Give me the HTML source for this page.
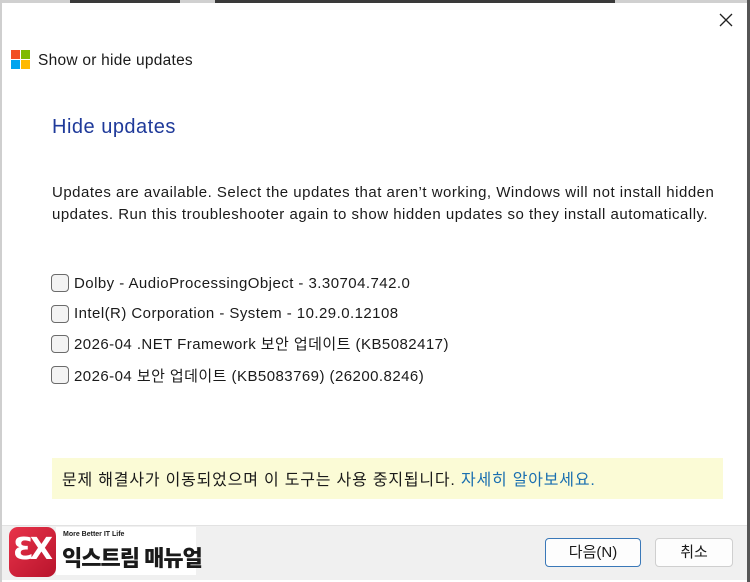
<!DOCTYPE html>
<html><head><meta charset="utf-8"><style>
*{margin:0;padding:0;box-sizing:border-box}
body{width:750px;height:582px;background:#fff;position:relative;overflow:hidden;font-family:"Liberation Sans","Noto Sans CJK KR",sans-serif;color:#1a1a1a}
.top{position:absolute;left:0;top:0;width:750px;height:3px;background:#d0d0d0}
.top b{position:absolute;top:0;height:3px;background:#3a3a3a}
.lb{position:absolute;left:0;top:0;width:2px;height:582px;background:#cfcfcf}
.rb{position:absolute;right:0;top:0;width:3px;height:582px;background:#555}
.abs{position:absolute;white-space:nowrap}
.cb{position:absolute;left:51px;width:18px;height:18px;border:1px solid #6b6b6b;border-radius:4px;background:#f3f3f3}
.item{position:absolute;left:74px;font-size:15px;line-height:20px;height:20px;color:#1a1a1a;letter-spacing:0.45px}
.footer{position:absolute;left:2px;top:525px;width:745px;height:55px;background:#f0f0f0;border-top:1px solid #e2e2e2}
.btn{position:absolute;height:29px;border:1px solid #cfcfcf;border-radius:4px;background:#fdfdfd;font-size:15px;text-align:center;line-height:27px}
</style></head><body>
<div class="top"><b style="left:70px;width:110px"></b><b style="left:215px;width:400px"></b></div>
<div class="lb"></div><div class="rb"></div>
<svg class="abs" style="left:718px;top:12px" width="16" height="16"><path d="M2 2L14 14M14 2L2 14" stroke="#222" stroke-width="1.3"/></svg>
<div class="abs" style="left:11px;top:50px;width:9px;height:9px;background:#f25022"></div>
<div class="abs" style="left:21px;top:50px;width:9px;height:9px;background:#7fba00"></div>
<div class="abs" style="left:11px;top:60px;width:9px;height:9px;background:#00a4ef"></div>
<div class="abs" style="left:21px;top:60px;width:9px;height:9px;background:#ffb900"></div>
<div class="abs" style="left:38px;top:52px;font-size:15.5px;letter-spacing:0.25px">Show or hide updates</div>
<div class="abs" style="left:52px;top:116px;font-size:20px;color:#1f3a9a;letter-spacing:0.5px">Hide updates</div>
<div class="abs" style="left:52px;top:182px;font-size:15px;line-height:22px;letter-spacing:0.5px">Updates are available. Select the updates that aren’t working, Windows will not install hidden<br>updates. Run this troubleshooter again to show hidden updates so they install automatically.</div>
<div class="cb" style="top:274px"></div><div class="item abs" style="top:274px">Dolby - AudioProcessingObject - 3.30704.742.0</div>
<div class="cb" style="top:305px"></div><div class="item abs" style="top:304px">Intel(R) Corporation - System - 10.29.0.12108</div>
<div class="cb" style="top:335px"></div><div class="item abs" style="top:335px">2026-04 .NET Framework 보안 업데이트 (KB5082417)</div>
<div class="cb" style="top:366px"></div><div class="item abs" style="top:367px">2026-04 보안 업데이트 (KB5083769) (26200.8246)</div>
<div class="abs" style="left:52px;top:458px;width:671px;height:41px;background:#fbfbd6"></div>
<div class="abs" style="left:62px;top:471px;font-size:16px;line-height:20px;letter-spacing:0.8px">문제 해결사가 이동되었으며 이 도구는 사용 중지됩니다. <span style="color:#1a6fb0">자세히 알아보세요.</span></div>
<div class="footer"></div>
<div class="abs" style="left:9px;top:527px;width:47px;height:50px;border-radius:9px;background:linear-gradient(135deg,#e8334a,#b8142c)"></div>
<div class="abs" style="left:13px;top:532px;font-size:30px;font-weight:bold;color:#fff;font-family:'DejaVu Sans',sans-serif;letter-spacing:-4px">ƐX</div>
<div class="abs" style="left:56px;top:527px;width:140px;height:48px;background:#fff"></div>
<div class="abs" style="left:63px;top:531px;font-size:7px;font-weight:bold">More Better IT Life</div>
<div class="abs" style="left:62px;top:541px;font-size:22px;font-weight:900;letter-spacing:-1px">익스트림 매뉴얼</div>
<div class="btn" style="left:545px;top:538px;width:96px;border-color:#3a78b8">다음(N)</div>
<div class="btn" style="left:655px;top:538px;width:78px">취소</div>
</body></html>
